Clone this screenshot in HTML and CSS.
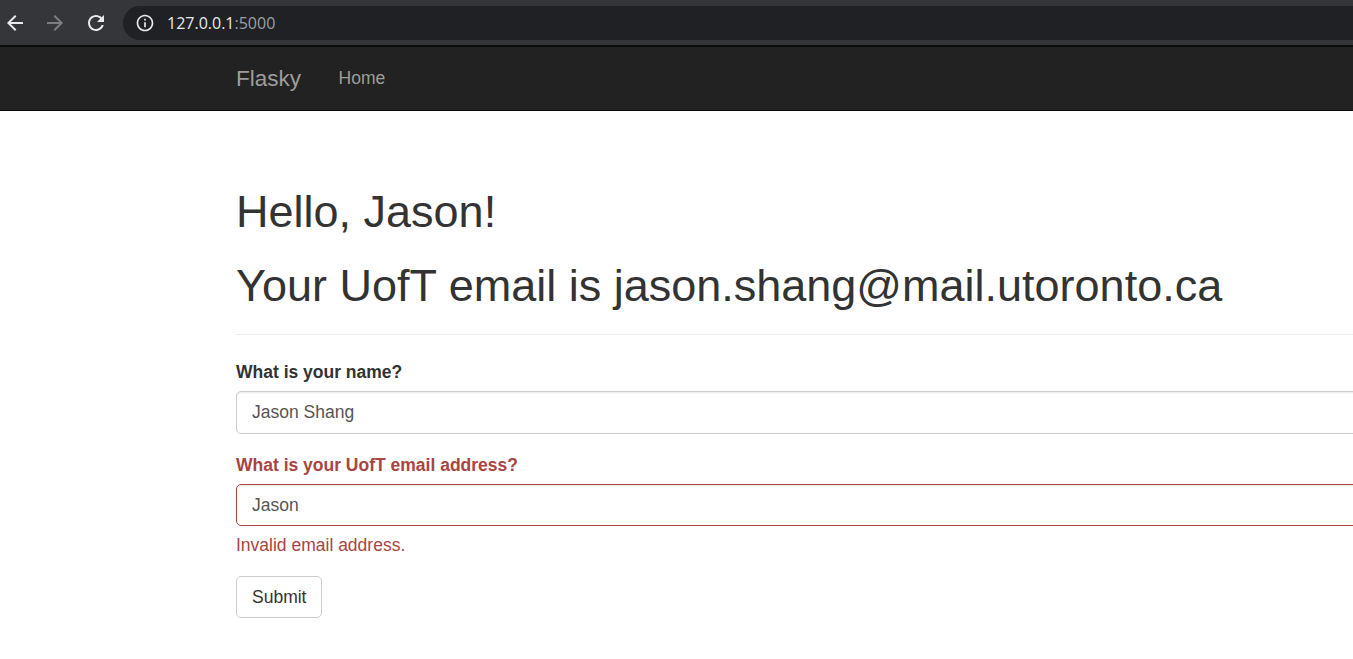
FILE: index.html
```html
<!DOCTYPE html>
<html lang="en">
<head>
<meta charset="utf-8">
<title>Flasky</title>
<link rel="stylesheet" href="styles.css">
</head>
<body>
<div class="chrome">
  <svg class="tool-icon back" width="24" height="24" viewBox="0 0 24 24"><path fill="#e8eaed" d="M20 11H7.83l5.59-5.59L12 4l-8 8 8 8 1.41-1.41L7.83 13H20v-2z"/></svg>
  <svg class="tool-icon fwd" width="24" height="24" viewBox="0 0 24 24"><path fill="#7c7d80" d="M12 4l-1.41 1.41L16.17 11H4v2h12.17l-5.58 5.59L12 20l8-8z"/></svg>
  <svg class="tool-icon reload" width="24" height="24" viewBox="0 0 24 24"><path fill="#e8eaed" d="M17.65 6.35C16.2 4.9 14.21 4 12 4c-4.42 0-7.99 3.58-7.99 8s3.57 8 7.99 8c3.73 0 6.84-2.55 7.73-6h-2.08c-.82 2.33-3.04 4-5.65 4-3.31 0-6-2.69-6-6s2.69-6 6-6c1.66 0 3.14.69 4.22 1.78L13 11h7V4l-2.35 2.35z"/></svg>
  <div class="omnibox">
    <svg class="info" width="20" height="20" viewBox="0 0 24 24"><path fill="#e8eaed" d="M11 7h2v2h-2zm0 4h2v6h-2zm1-9C6.48 2 2 6.48 2 12s4.48 10 10 10 10-4.48 10-10S17.52 2 12 2zm0 18c-4.41 0-8-3.59-8-8s3.59-8 8-8 8 3.59 8 8-3.59 8-8 8z"/></svg>
    <span class="url"><span class="host">127.0.0.1</span><span class="port">:5000</span></span>
  </div>
</div>

<nav class="navbar">
  <div class="container nav-inner">
    <a class="brand" href="#">Flasky</a>
    <ul class="nav">
      <li><a href="#">Home</a></li>
    </ul>
  </div>
</nav>

<div class="container">
  <div class="page-header">
    <h1>Hello, Jason!</h1>
    <h1>Your UofT email is jason.shang@mail.utoronto.ca</h1>
  </div>
  <form class="form">
    <div class="form-group">
      <label class="control-label">What is your name?</label>
      <input class="form-control" type="text" value="Jason Shang">
    </div>
    <div class="form-group has-error">
      <label class="control-label">What is your UofT email address?</label>
      <input class="form-control" type="text" value="Jason">
      <span class="help-block">Invalid email address.</span>
    </div>
    <button class="btn" type="button">Submit</button>
  </form>
</div>
</body>
</html>
```

FILE: styles.css
```css
html, body {
  margin: 0;
  padding: 0;
  background: #fff;
  overflow: hidden;
}
body {
  font-family: "Liberation Sans", Arial, Helvetica, sans-serif;
  font-size: 17.5px;
  line-height: 1.428571;
  color: #333;
  width: 1353px;
  height: 659px;
}

/* browser chrome */
.chrome {
  height: 45px;
  background: #35363a;
  display: flex;
  align-items: center;
  padding-left: 3px;
}
.tool-icon {
  display: block;
  flex: none;
}
.fwd { margin-left: 16px; }
.reload { margin-left: 17px; }
.omnibox {
  flex: 1;
  margin-left: 15px;
  height: 34px;
  background: #202124;
  border-radius: 17px 0 0 17px;
  display: flex;
  align-items: center;
  padding-left: 12px;
}
.info { display: block; flex: none; }
.url {
  margin-left: 12px;
  font-family: "Open Sans", "Liberation Sans", Arial, sans-serif;
  font-size: 16px;
  line-height: 20px;
}
.host { color: #e8eaed; }
.port { color: #9aa0a6; }

/* navbar */
.navbar {
  background: #222;
  border-top: 2px solid #0b0b0b;
  border-bottom: 1.25px solid #080808;
  height: 62.5px;
  margin-bottom: 25px;
}
.container {
  margin-left: 217.25px;
  padding: 0 18.75px;
  width: 1462.5px;
  box-sizing: border-box;
}
.nav-inner {
  display: flex;
  height: 62.5px;
}
.brand {
  margin-left: -18.75px;
  padding: 18.75px;
  font-size: 22.5px;
  line-height: 25px;
  color: #9d9d9d;
  text-decoration: none;
}
.nav {
  list-style: none;
  margin: 0;
  padding: 0;
  display: flex;
}
.nav a {
  display: block;
  padding: 18.75px;
  line-height: 25px;
  color: #9d9d9d;
  text-decoration: none;
}

/* page header */
.page-header {
  margin: 76px 0 25px;
  padding-bottom: 11.25px;
  border-bottom: 1.25px solid #eee;
}
h1 {
  font-size: 45px;
  font-weight: 500;
  line-height: 1.1;
  margin: 25px 0 12.5px;
  color: #333;
}
.page-header h1:first-child { margin-top: 0; }

/* form */
.form { margin: 0; }
.form-group { margin-bottom: 18.75px; }
.control-label {
  display: inline-block;
  margin-bottom: 6.25px;
  font-weight: bold;
}
.form-control {
  display: block;
  box-sizing: border-box;
  width: 100%;
  height: 42.5px;
  padding: 7.5px 15px;
  font-family: inherit;
  font-size: 17.5px;
  line-height: 1.428571;
  color: #555;
  background: #fff;
  border: 1.25px solid #ccc;
  border-radius: 5px;
  box-shadow: inset 0 1.25px 1.25px rgba(0,0,0,.075);
  outline: none;
}
.has-error .control-label,
.has-error .help-block { color: #a94442; }
.has-error .form-control { border-color: #a94442; }
.help-block {
  display: block;
  margin-top: 6.25px;
  margin-bottom: 12.5px;
}
.btn {
  display: inline-block;
  padding: 7.5px 15px;
  font-family: inherit;
  font-size: 17.5px;
  line-height: 25px;
  color: #333;
  background: #fff;
  border: 1.25px solid #ccc;
  border-radius: 5px;
  cursor: pointer;
}
```
